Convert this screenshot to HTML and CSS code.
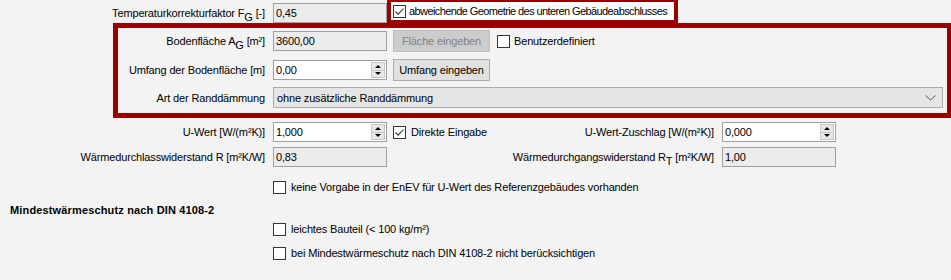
FILE: index.html
```html
<!DOCTYPE html>
<html lang="de">
<head>
  <meta charset="UTF-8" />
  <title>Bauteil - Bodenplatte</title>
  <link rel="stylesheet" href="styles.css">
</head>
<body>
  <div class="page">
    <div class="row row-top">
      <span class="lbl w-main">Temperaturkorrekturfaktor F<span class="sub">G</span> [-]</span>
      <span class="field ro">0,45</span>
      <div class="mark mark-top">
        <span class="cb"><svg width="11" height="11" viewBox="0 0 11 11"><path d="M1.5 5.5 L4.2 8.2 L9.5 2.5" fill="none" stroke="#333" stroke-width="1.1"/></svg></span>
        <span>abweichende Geometrie des unteren Gebäudeabschlusses</span>
      </div>
    </div>

    <div class="mark mark-box">
      <div class="row row-a">
        <span class="lbl w-inner">Bodenfläche A<span class="sub">G</span> [m²]</span>
        <span class="field ro">3600,00</span>
        <button class="btn" disabled>Fläche eingeben</button>
        <span class="check check-user"><span class="cb"></span>Benutzerdefiniert</span>
      </div>
      <div class="row row-b">
        <span class="lbl w-inner">Umfang der Bodenfläche [m]</span>
        <span class="field">0,00
          <span class="spinner"><span class="up"></span><span class="down"></span></span>
        </span>
        <button class="btn">Umfang eingeben</button>
      </div>
      <div class="row row-c">
        <span class="lbl w-inner">Art der Randdämmung</span>
        <span class="combo">ohne zusätzliche Randdämmung
          <svg width="11" height="6" viewBox="0 0 11 6"><path d="M0.5 0.5 L5.5 5 L10.5 0.5" fill="none" stroke="#555" stroke-width="1"/></svg>
        </span>
      </div>
    </div>

    <div class="row row-u">
      <span class="lbl w-main">U-Wert [W/(m²K)]</span>
      <span class="field">1,000
        <span class="spinner"><span class="up"></span><span class="down"></span></span>
      </span>
      <span class="check check-direct"><span class="cb"><svg width="11" height="11" viewBox="0 0 11 11"><path d="M1.5 5.5 L4.2 8.2 L9.5 2.5" fill="none" stroke="#333" stroke-width="1.1"/></svg></span>Direkte Eingabe</span>
      <span class="lbl grow">U-Wert-Zuschlag [W/(m²K)]</span>
      <span class="field">0,000
        <span class="spinner"><span class="up"></span><span class="down"></span></span>
      </span>
    </div>
    <div class="row row-r">
      <span class="lbl w-main">Wärmedurchlasswiderstand R [m²K/W]</span>
      <span class="field ro">0,83</span>
      <span class="lbl grow">Wärmedurchgangswiderstand R<span class="sub">T</span> [m²K/W]</span>
      <span class="field ro">1,00</span>
    </div>

    <div class="row row-opt row-k">
      <span class="check"><span class="cb"></span>keine Vorgabe in der EnEV für U-Wert des Referenzgebäudes vorhanden</span>
    </div>

    <div class="heading">Mindestwärmeschutz nach DIN 4108-2</div>

    <div class="row row-opt row-l">
      <span class="check"><span class="cb"></span>leichtes Bauteil (&lt; 100 kg/m²)</span>
    </div>
    <div class="row row-opt row-m">
      <span class="check"><span class="cb"></span>bei Mindestwärmeschutz nach DIN 4108-2 nicht berücksichtigen</span>
    </div>
  </div>
</body>
</html>
```

FILE: styles.css
```css
/* WinForms style property panel */
body {
  margin: 0;
  background: #f3f3f3;
  color: #000;
  font-family: "Liberation Sans", Arial, sans-serif;
  font-size: 11px;
  letter-spacing: -0.15px;
  overflow: hidden;
}
.page {
  width: 951px;
}
.row {
  display: flex;
  align-items: center;
}
.lbl {
  text-align: right;
  white-space: nowrap;
}
.w-main {
  width: 265px;
}
.w-inner {
  width: 147px;
}
.grow {
  flex: 1;
}
.sub {
  vertical-align: -4px;
  line-height: 0;
}
.field {
  box-sizing: border-box;
  display: flex;
  align-items: center;
  justify-content: space-between;
  width: 114px;
  height: 20px;
  margin-left: 8px;
  padding: 0 1px 0 2px;
  border: 1px solid #a0a0a0;
  background: #fff;
}
.field.ro {
  background: #ececec;
}
.spinner {
  display: flex;
  flex-direction: column;
  width: 14px;
  height: 16px;
  border: 1px solid #c8c8c8;
  box-sizing: border-box;
}
.spinner .up,
.spinner .down {
  flex: 1;
  display: flex;
  align-items: center;
  justify-content: center;
  background: #e8e8e8;
}
.spinner .up {
  border-bottom: 1px solid #c8c8c8;
}
.spinner .up::after {
  content: "";
  border-left: 3px solid transparent;
  border-right: 3px solid transparent;
  border-bottom: 3px solid #000;
}
.spinner .down::after {
  content: "";
  border-left: 3px solid transparent;
  border-right: 3px solid transparent;
  border-top: 3px solid #000;
}

/* red highlight frames */
.mark {
  border: 4px solid #990000;
}
.mark-top {
  display: flex;
  align-items: center;
  gap: 3px;
  width: 281px;
  height: 18px;
  margin-top: -2px;
  padding-left: 2px;
  background: #fff;
  white-space: nowrap;
  letter-spacing: -0.6px;
}
.mark-box {
  margin: -1px 0 0 113px;
  padding: 2px 0 5px;
  border-width: 5px 4px 5px 5px;
}

.row-top {
  align-items: flex-start;
}
.row-top .lbl {
  margin-top: 3px;
  line-height: 20px;
}
.row-top .field {
  margin-top: 3px;
}
.row-a {
  height: 22px;
}
.row-b {
  height: 22px;
  margin-top: 7px;
}
.row-c {
  margin-top: 6px;
}

.btn {
  box-sizing: border-box;
  width: 97px;
  height: 22px;
  margin-left: 6px;
  padding: 0;
  border: 1px solid #adadad;
  background: #e1e1e1;
  color: #000;
  font: inherit;
  letter-spacing: inherit;
}
.btn:disabled {
  background: #cccccc;
  border-color: #bfbfbf;
  color: #838383;
}
.combo {
  box-sizing: border-box;
  flex: 1;
  display: flex;
  align-items: center;
  justify-content: space-between;
  height: 21px;
  margin: 0 4px 0 8px;
  padding: 0 6px 0 3px;
  border: 1px solid #acacac;
  background: #e5e5e5;
}

.check {
  display: flex;
  align-items: center;
  gap: 5px;
  white-space: nowrap;
}
.check-user {
  margin-left: 7px;
  gap: 4px;
}
.check-direct {
  margin-left: 6px;
}
.cb {
  box-sizing: border-box;
  display: flex;
  align-items: center;
  justify-content: center;
  width: 13px;
  height: 13px;
  border: 1px solid #333;
  background: #fff;
}

.row-u {
  height: 20px;
  margin-top: 4px;
  width: 836px;
}
.row-r {
  height: 20px;
  margin-top: 5px;
  width: 836px;
}
.row-opt {
  height: 14px;
  padding-left: 273px;
}
.row-k {
  margin-top: 13px;
}
.heading {
  margin-top: 9px;
  padding-left: 10px;
  line-height: 14px;
  font-weight: bold;
  letter-spacing: 0.15px;
}
.row-l {
  margin-top: 5px;
}
.row-m {
  margin-top: 10px;
}
```
